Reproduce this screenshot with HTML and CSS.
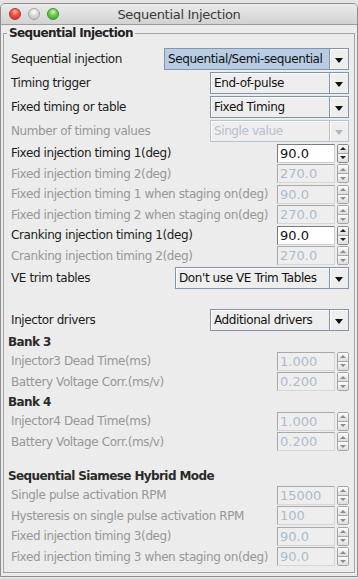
FILE: index.html
```html
<!DOCTYPE html>
<html lang="en">
<head>
  <meta charset="UTF-8">
  <title>Sequential Injection</title>
  <link rel="stylesheet" href="styles.css">
</head>
<body>

  <div class="window">
    <div class="titlebar">
      <div class="lights">
        <span class="light red"></span>
        <span class="light grey"></span>
        <span class="light green"></span>
      </div>
      <div class="title">Sequential Injection</div>
    </div>

    <div class="content">
      <fieldset class="group">
        <legend>Sequential Injection</legend>

        <div class="row combo-row">
          <span class="label">Sequential injection</span>
          <div class="combo wide selected"><span class="value">Sequential/Semi-sequential</span><span class="arrow"></span></div>
        </div>
        <div class="row combo-row">
          <span class="label">Timing trigger</span>
          <div class="combo"><span class="value">End-of-pulse</span><span class="arrow"></span></div>
        </div>
        <div class="row combo-row">
          <span class="label">Fixed timing or table</span>
          <div class="combo"><span class="value">Fixed Timing</span><span class="arrow"></span></div>
        </div>
        <div class="row combo-row off">
          <span class="label">Number of timing values</span>
          <div class="combo"><span class="value">Single value</span><span class="arrow"></span></div>
        </div>

        <div class="row spin-row">
          <span class="label">Fixed injection timing 1(deg)</span>
          <div class="spinner"><span class="field">90.0</span><span class="buttons"><span class="up"></span><span class="down"></span></span></div>
        </div>
        <div class="row spin-row off">
          <span class="label">Fixed injection timing 2(deg)</span>
          <div class="spinner"><span class="field">270.0</span><span class="buttons"><span class="up"></span><span class="down"></span></span></div>
        </div>
        <div class="row spin-row off">
          <span class="label">Fixed injection timing 1 when staging on(deg)</span>
          <div class="spinner"><span class="field">90.0</span><span class="buttons"><span class="up"></span><span class="down"></span></span></div>
        </div>
        <div class="row spin-row off">
          <span class="label">Fixed injection timing 2 when staging on(deg)</span>
          <div class="spinner"><span class="field">270.0</span><span class="buttons"><span class="up"></span><span class="down"></span></span></div>
        </div>
        <div class="row spin-row">
          <span class="label">Cranking injection timing 1(deg)</span>
          <div class="spinner"><span class="field">90.0</span><span class="buttons"><span class="up"></span><span class="down"></span></span></div>
        </div>
        <div class="row spin-row off">
          <span class="label">Cranking injection timing 2(deg)</span>
          <div class="spinner"><span class="field">270.0</span><span class="buttons"><span class="up"></span><span class="down"></span></span></div>
        </div>

        <div class="row combo-row">
          <span class="label">VE trim tables</span>
          <div class="combo mid"><span class="value">Don't use VE Trim Tables</span><span class="arrow"></span></div>
        </div>

        <div class="spacer"></div>

        <div class="row combo-row">
          <span class="label">Injector drivers</span>
          <div class="combo"><span class="value">Additional drivers</span><span class="arrow"></span></div>
        </div>

        <div class="row head-row"><span class="head">Bank 3</span></div>
        <div class="row spin-row off">
          <span class="label">Injector3 Dead Time(ms)</span>
          <div class="spinner"><span class="field">1.000</span><span class="buttons"><span class="up"></span><span class="down"></span></span></div>
        </div>
        <div class="row spin-row off">
          <span class="label">Battery Voltage Corr.(ms/v)</span>
          <div class="spinner"><span class="field">0.200</span><span class="buttons"><span class="up"></span><span class="down"></span></span></div>
        </div>

        <div class="row head-row"><span class="head">Bank 4</span></div>
        <div class="row spin-row off">
          <span class="label">Injector4 Dead Time(ms)</span>
          <div class="spinner"><span class="field">1.000</span><span class="buttons"><span class="up"></span><span class="down"></span></span></div>
        </div>
        <div class="row spin-row off">
          <span class="label">Battery Voltage Corr.(ms/v)</span>
          <div class="spinner"><span class="field">0.200</span><span class="buttons"><span class="up"></span><span class="down"></span></span></div>
        </div>

        <div class="spacer small"></div>

        <div class="row head-row"><span class="head">Sequential Siamese Hybrid Mode</span></div>
        <div class="row spin-row off">
          <span class="label">Single pulse activation RPM</span>
          <div class="spinner"><span class="field">15000</span><span class="buttons"><span class="up"></span><span class="down"></span></span></div>
        </div>
        <div class="row spin-row off">
          <span class="label">Hysteresis on single pulse activation RPM</span>
          <div class="spinner"><span class="field">100</span><span class="buttons"><span class="up"></span><span class="down"></span></span></div>
        </div>
        <div class="row spin-row off">
          <span class="label">Fixed injection timing 3(deg)</span>
          <div class="spinner"><span class="field">90.0</span><span class="buttons"><span class="up"></span><span class="down"></span></span></div>
        </div>
        <div class="row spin-row off">
          <span class="label">Fixed injection timing 3 when staging on(deg)</span>
          <div class="spinner"><span class="field">90.0</span><span class="buttons"><span class="up"></span><span class="down"></span></span></div>
        </div>
      </fieldset>
    </div>
  </div>

</body>
</html>
```

FILE: styles.css
```css
body {
  margin: 0;
  padding-top: 3px;
  background: #e4e4e4;
  font-family: "DejaVu Sans", sans-serif;
}

.window {
  width: 356px;
  border: 1px solid #8e8e8e;
  border-radius: 5px 5px 0 0;
  background: #ececec;
}

/* title bar */
.titlebar {
  display: grid;
  grid-template-columns: 1fr auto 1fr;
  align-items: center;
  height: 20px;
  padding-left: 8px;
  border-bottom: 1px solid #9c9c9c;
  border-radius: 4px 4px 0 0;
  background: linear-gradient(#ebebeb, #d2d2d2);
}

.lights {
  display: flex;
  gap: 7px;
}

.light {
  width: 12px;
  height: 12px;
  box-sizing: border-box;
  border-radius: 50%;
  border: 1px solid;
}

.red {
  background: radial-gradient(circle at 50% 30%, #ffb2a8 0, #f0503f 45%, #c0251a 100%);
  border-color: #b03a30;
}

.grey {
  background: radial-gradient(circle at 50% 30%, #ffffff 0, #d6d6d6 50%, #b8b8b8 100%);
  border-color: #a4a4a4;
}

.green {
  background: radial-gradient(circle at 50% 30%, #d4f5b8 0, #6cc94e 45%, #3a9a22 100%);
  border-color: #3e8e2e;
}

.title {
  font-size: 13px;
  letter-spacing: -0.3px;
  color: #3a3a3a;
  margin-left: -8px;
}

/* body */
.content {
  padding: 1px 2px 3px 2px;
}

.group {
  margin: 0;
  min-width: 0;
  padding: 7px 5px 5px 7px;
  border: 1px solid #a3a3a3;
}

.group legend {
  margin-left: -4px;
  padding: 0 2px;
  font-size: 12px;
  line-height: 14px;
  font-weight: bold;
  letter-spacing: -0.6px;
  color: #222;
}

.row {
  display: flex;
  align-items: center;
  justify-content: space-between;
}

.combo-row {
  height: 24px;
}

.spin-row {
  height: 20.5px;
}

.head-row {
  height: 19px;
}

.spacer {
  height: 18px;
}

.spacer.small {
  height: 14px;
}

.label {
  font-size: 12px;
  letter-spacing: -0.4px;
  color: #1c1c1c;
  white-space: nowrap;
}

.off .label {
  color: #979797;
}

.head {
  margin-left: -3px;
  font-size: 12px;
  font-weight: bold;
  letter-spacing: -0.6px;
  color: #2a2a2a;
  white-space: nowrap;
}

/* combo boxes */
.combo {
  display: flex;
  width: 139px;
  height: 22px;
  box-sizing: border-box;
  border: 1px solid #8196ae;
  background: #eeeeee;
}

.combo.wide {
  width: 185px;
}

.combo.mid {
  width: 174px;
}

.combo .value {
  flex: 1;
  padding-left: 3px;
  font-size: 12px;
  line-height: 20px;
  letter-spacing: -0.4px;
  color: #111;
  white-space: nowrap;
  overflow: hidden;
  box-shadow: inset 1px 1px 0 #fff;
}

.combo.selected .value {
  background: #b8cde3;
  box-shadow: none;
}

.combo .arrow {
  display: flex;
  align-items: center;
  justify-content: center;
  width: 18px;
  border-left: 1px solid #8196ae;
  box-shadow: inset 1px 1px 0 #fff;
}

.combo .arrow::after {
  content: "";
  margin-top: 2px;
  border-left: 4.5px solid transparent;
  border-right: 4.5px solid transparent;
  border-top: 5px solid #111;
}

.off .combo {
  border-color: #b7c3d1;
}

.off .combo .value {
  color: #b3c0d1;
}

.off .combo .arrow {
  border-left-color: #b7c3d1;
}

.off .combo .arrow::after {
  border-top-color: #aab7c7;
}

/* spinners */
.spinner {
  display: flex;
  align-items: center;
  gap: 2px;
}

.field {
  width: 58px;
  height: 19px;
  box-sizing: border-box;
  padding-left: 2px;
  border: 1px solid;
  border-color: #7c7c7c #cfcfcf #cfcfcf #7c7c7c;
  background: #fff;
  font-size: 13px;
  line-height: 17px;
  color: #111;
}

.off .field {
  border-color: #a9a9a9 #d6d6d6 #d6d6d6 #a9a9a9;
  background: #eeeeee;
  color: #adbbcf;
}

.buttons {
  display: flex;
  flex-direction: column;
  width: 12px;
  height: 19px;
  box-sizing: border-box;
  border: 1px solid #8a8a8a;
  border-radius: 2px;
  overflow: hidden;
}

.up,
.down {
  display: flex;
  align-items: center;
  justify-content: center;
  flex: 1;
  background: linear-gradient(#fdfdfd, #dcdcdc);
}

.up {
  border-bottom: 1px solid #a8a8a8;
}

.up::after {
  content: "";
  border-left: 3px solid transparent;
  border-right: 3px solid transparent;
  border-bottom: 3px solid #222;
}

.down::after {
  content: "";
  border-left: 3px solid transparent;
  border-right: 3px solid transparent;
  border-top: 3px solid #222;
}

.off .buttons {
  border-color: #a6a6a6;
}

.off .up::after {
  border-bottom-color: #8c8c8c;
}

.off .down::after {
  border-top-color: #8c8c8c;
}
```
